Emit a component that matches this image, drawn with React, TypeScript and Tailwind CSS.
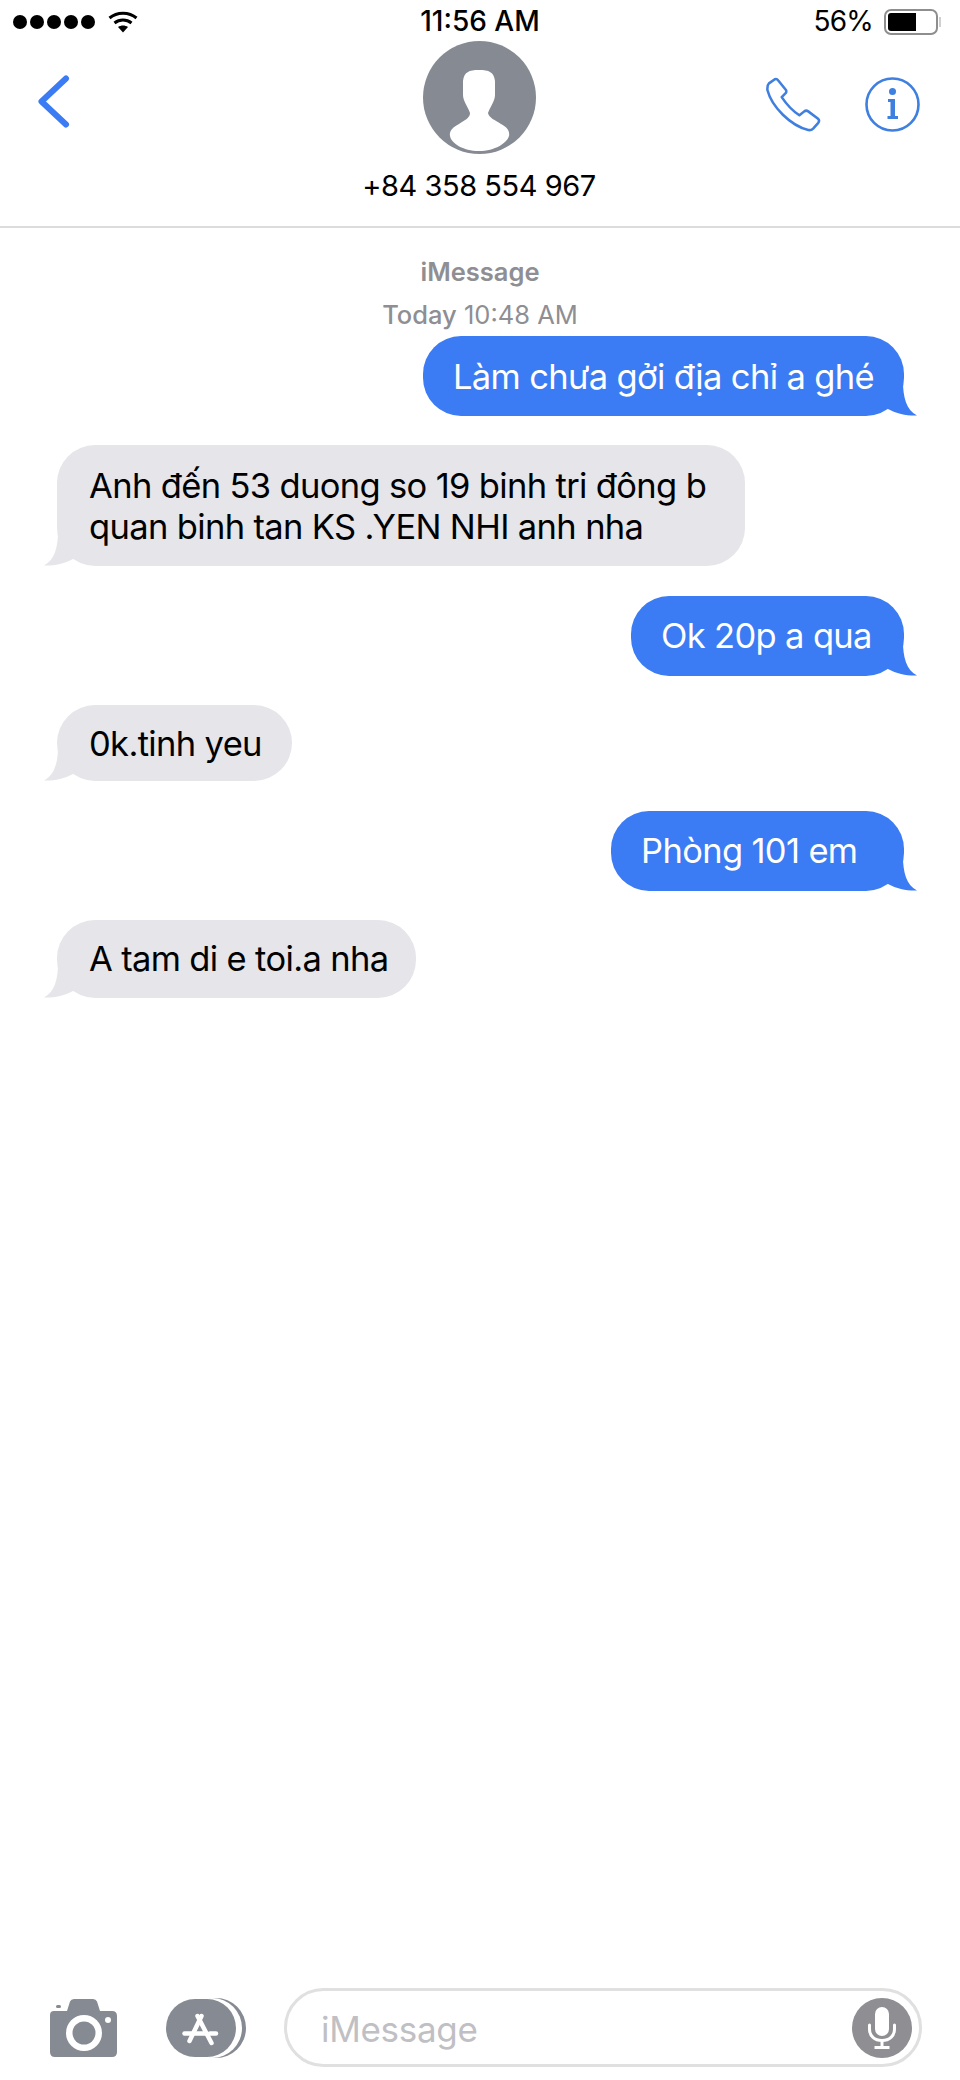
const messages = [
  { id: 1, mine: true, text: "Làm chưa gởi địa chỉ a ghé", size: "h-[80px] w-[481px]" },
  { id: 2, mine: false, text: "Anh đến 53 duong so 19 binh tri đông b\nquan binh tan KS .YEN NHI anh nha", size: "h-[121px] w-[688px]" },
  { id: 3, mine: true, text: "Ok 20p a qua", size: "h-[80px] w-[273px]" },
  { id: 4, mine: false, text: "0k.tinh yeu", size: "h-[76px] w-[235px]" },
  { id: 5, mine: true, text: "Phòng 101 em", size: "h-[80px] w-[293px]" },
  { id: 6, mine: false, text: "A tam di e toi.a nha", size: "h-[78px] w-[359px]" },
];

function BubbleTail({ mine }: { mine: boolean }) {
  if (mine) {
    return (
      <svg className="absolute right-[-14px] bottom-0" width="30" height="34" viewBox="0 0 30 34" fill="#3b7bf3">
        <path d="M0 0 L15 0 C15 14 18 28 29 33.5 C20 34 9 32 0 27 Z" />
      </svg>
    );
  }
  return (
    <svg className="absolute left-[-14px] bottom-0" width="30" height="34" viewBox="0 0 30 34" fill="#e5e5ea">
      <path d="M30 0 L15 0 C15 14 12 28 1 33.5 C10 34 21 32 30 27 Z" />
    </svg>
  );
}

function Bubble({ mine, text, size }: { mine: boolean; text: string; size: string }) {
  return (
    <div className={`flex ${mine ? "justify-end pr-[56px]" : "justify-start pl-[57px]"}`}>
      <div
        className={`relative flex items-center rounded-[38px] text-[34.5px] leading-[41px] tracking-[-0.65px] whitespace-pre ${size} ${
          mine ? "bg-[#3b7bf3] pl-[30px] text-white" : "bg-[#e5e5ea] pl-[32px] text-black"
        }`}
      >
        <BubbleTail mine={mine} />
        <span className="relative">{text}</span>
      </div>
    </div>
  );
}

function StatusBar() {
  return (
    <div className="relative flex h-[41px] items-center justify-between pt-[2px] pl-[13px] pr-[19px]">
      <div className="flex items-center">
        <div className="flex gap-[3px]">
          {[1, 2, 3, 4, 5].map((dot) => (
            <div key={dot} className="h-[14px] w-[14px] rounded-full bg-black" />
          ))}
        </div>
        <svg className="ml-[13px]" width="30" height="22" viewBox="0 0 30 22" fill="none" stroke="black" strokeWidth="3">
          <path d="M1.5 7 C9 0.5 21 0.5 28.5 7" />
          <path d="M6.5 12 C11.5 8 18.5 8 23.5 12" />
          <path d="M15 21.5 L10 16 C13 14 17 14 20 16 Z" fill="black" stroke="none" />
        </svg>
      </div>
      <div className="absolute left-0 right-0 text-center text-[28px] font-medium leading-[41px] text-black">11:56 AM</div>
      <div className="flex items-center">
        <span className="text-[28px] leading-[41px] tracking-[-0.8px] text-black">56%</span>
        <div className="ml-[11px] flex h-[26px] w-[54px] rounded-[7px] border-2 border-[#8e8e8e] p-[2px]">
          <div className="w-[28px] rounded-l-[3px] bg-black" />
        </div>
        <div className="ml-[1px] h-[10px] w-[2px] bg-[#d0d0d0]" />
      </div>
    </div>
  );
}

function Avatar() {
  return (
    <svg width="113" height="113" viewBox="0 0 113 113">
      <circle cx="56.5" cy="56.5" r="56.5" fill="#868a93" />
      <path
        d="M56 29 C66 29 71 31 72 40 L72 54 C72 60 67 66 65 72 C66 77 72 79 78 83 C84 86 87 90 86 95 C84 102 72 110 56 110 C40 110 28 102 27 95 C26 90 30 86 36 83 C42 79 47 77 47 72 C45 66 40 60 40 54 L40 40 C41 31 46 29 56 29 Z"
        fill="white"
      />
    </svg>
  );
}

function NavBar() {
  return (
    <div className="grid grid-cols-[1fr_auto_1fr] pl-[38px] pr-[40px]">
      <div className="pt-[34px]">
        <svg width="32" height="53" viewBox="0 0 32 53" fill="none" stroke="#3b7bf3" strokeWidth="6" strokeLinecap="round" strokeLinejoin="round">
          <path d="M28 3.5 L3.5 26.5 L28 49.5" />
        </svg>
      </div>
      <div className="flex flex-col items-center">
        <Avatar />
        <div className="mt-[14px] text-[29px] leading-[36px] tracking-[-0.45px] text-black">+84 358 554 967</div>
      </div>
      <div className="flex justify-end gap-[44px] pt-[36px]">
        <svg width="55" height="55" viewBox="0 0 56 55" fill="none" stroke="#3f7fe0" strokeWidth="2.6" strokeLinejoin="round">
          <path d="M3 6 L9 1.8 Q11 1 12.5 3 L20.5 13 Q21 15 20 16 L16 20 Q24 32 34 38.5 L39 34.5 Q41 33 43 34.5 L53 42 Q55 44 53 46.5 L48 52 Q46 54 43 53.5 C25 49 6 30 1.5 13 Q1 8 3 6 Z" />
        </svg>
        <svg width="55" height="55" viewBox="0 0 55 55" fill="none">
          <circle cx="27.5" cy="27.5" r="26" stroke="#3f7fe0" strokeWidth="2.6" />
          <circle cx="27.5" cy="14.5" r="3.5" fill="#3f7fe0" />
          <path d="M23 22 H30 V39 H33 V42 H22.5 V39 H25.5 V25 H23 Z" fill="#3f7fe0" />
        </svg>
      </div>
    </div>
  );
}

function Toolbar() {
  return (
    <div className="flex items-center pb-[13px] pl-[50px] pr-[38px]">
      <svg width="67" height="58" viewBox="0 0 67 58" fill="#868a93">
        <path d="M4 12 H17 L20 2.5 Q21 0 24 0 H43 Q46 0 47 2.5 L50 12 H62 Q67 12 67 17 V53 Q67 58 62 58 H5 Q0 58 0 53 V16 Q0 12 4 12 Z" />
        <rect x="6" y="6" width="5" height="3" rx="1.5" />
        <circle cx="34" cy="34" r="18" fill="white" />
        <circle cx="34" cy="34" r="11.5" fill="#868a93" />
        <circle cx="58" cy="21" r="3" fill="white" />
      </svg>
      <svg className="ml-[48px]" width="82" height="60" viewBox="0 0 82 60">
        <circle cx="51" cy="30" r="30" fill="#868a93" />
        <ellipse cx="47" cy="30" rx="30" ry="30" fill="white" />
        <rect x="1" y="1" width="70" height="58" rx="29" fill="#868a93" />
        <g stroke="white" strokeWidth="4.5" strokeLinecap="round" fill="none">
          <path d="M36.5 18 L24.5 43" />
          <path d="M32.5 18 L46.5 45" />
          <path d="M19.5 35.5 H40" />
          <path d="M45 35.5 H51" />
        </g>
      </svg>
      <div className="ml-[37px] flex h-[79px] flex-1 items-center justify-between rounded-[40px] border-[3px] border-[#e0e0e0] pl-[34px] pr-[7px]">
        <span className="pt-[3px] text-[35px] tracking-[-0.3px] text-[#c0c0c4]">iMessage</span>
        <div className="flex h-[60px] w-[60px] items-center justify-center rounded-full bg-[#8e8e93]">
          <svg width="30" height="44" viewBox="0 0 30 44" fill="none" stroke="white" strokeWidth="3">
            <rect x="8" y="1" width="14" height="29" rx="7" fill="white" stroke="none" />
            <path d="M2.5 19 V23 C2.5 30 7.5 34.5 15 34.5 C22.5 34.5 27.5 30 27.5 23 V19" strokeLinecap="round" />
            <path d="M15 34.5 V41" />
            <path d="M7.5 41.5 H22.5" />
          </svg>
        </div>
      </div>
    </div>
  );
}

export default function App() {
  return (
    <div className="flex h-[2080px] w-[960px] flex-col bg-white font-['Inter','Noto_Sans',sans-serif]">
      <header className="h-[228px] border-b-2 border-[#dcdcdc]">
        <StatusBar />
        <NavBar />
      </header>

      <div className="flex flex-col items-center pt-[26px] text-[#8e8e93]">
        <div className="text-[25.5px] font-semibold leading-[36px]">iMessage</div>
        <div className="mt-[7px] text-[25.5px] leading-[36px]">
          <span className="font-medium">Today</span> 10:48 AM
        </div>
      </div>

      <div className="mt-[3px] flex flex-1 flex-col gap-[29.4px]">
        {messages.map((m) => (
          <Bubble key={m.id} mine={m.mine} text={m.text} size={m.size} />
        ))}
      </div>

      <Toolbar />
    </div>
  );
}
